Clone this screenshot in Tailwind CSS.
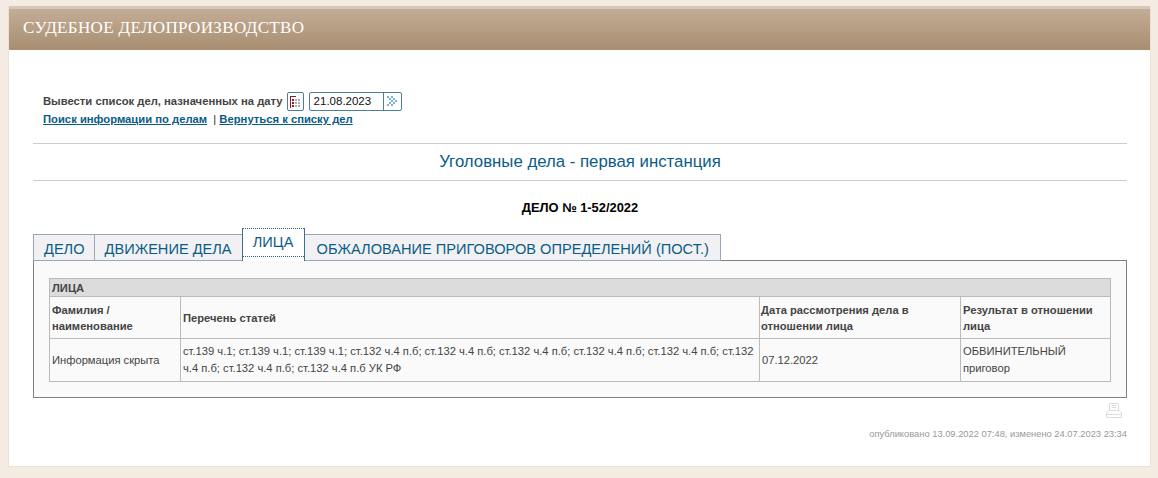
<!DOCTYPE html>
<html lang="ru">
<head>
  <meta charset="UTF-8" />
  <title>Судебное делопроизводство</title>
  <script src="https://cdn.jsdelivr.net/npm/@tailwindcss/browser@4"></script>
</head>
<body class="bg-[#f4ece3] font-['Liberation_Sans',Arial,sans-serif] text-[11.2px] text-[#333] overflow-hidden">
  <div class="h-[478px] pt-[6px] pl-[8px]">
    <div class="w-[1143px] h-[461px] bg-white border-x border-b border-[#ebe1d6]">
      <!-- шапка -->
      <div class="h-[44px] border-t-[3px] border-[#d6c8b8] bg-gradient-to-b from-[#c4ad96] to-[#a78e71] pl-[14px] pt-[9px] font-['Liberation_Serif',serif] text-[17px] leading-[20px] tracking-[0.35px] text-white">СУДЕБНОЕ ДЕЛОПРОИЗВОДСТВО</div>

      <div class="pl-[24px] pr-[23px]">
        <div class="pl-[10px] pt-[41px] h-[93px]">
          <div class="flex items-center h-[20px] font-bold text-[11.25px] text-[#444]">
            <span>Вывести список дел, назначенных на дату</span>
            <span class="ml-[4px] w-[17px] h-[19px] border border-[#4d7f99] rounded-[2px] flex items-center justify-center">
              <svg width="11" height="13" viewBox="0 0 11 13">
                <path d="M0 1h1v12H0zM1 1h5v1H1z" fill="#8b1a2b"/>
                <path d="M2 4h2v2H2zM2 7h2v2H2zM2 10h2v2H2z" fill="#8b1a2b"/>
                <path d="M5 4h2v2H5zM8 4h2v2H8zM5 7h2v2H5zM8 7h2v2H8zM5 10h2v2H5zM8 10h2v2H8z" fill="#a3aeb8"/>
              </svg>
            </span>
            <div class="ml-[5px] w-[93px] h-[19px] border border-[#4d7f99] rounded-[2px] flex items-center">
              <span class="flex-1 pl-[4px] pt-px font-normal text-[11.5px] text-[#111]">21.08.2023</span>
              <span class="w-[18px] h-full border-l border-[#4d7f99] flex items-center justify-center">
                <svg width="12" height="12" viewBox="0 0 12 12" fill="#7db4d6">
                  <path d="M1 1h2v2H1zM5 1h2v2H5zM3 3h2v2H3zM7 3h2v2H7zM5 5h2v2H5zM9 5h2v2H9zM3 7h2v2H3zM7 7h2v2H7zM1 9h2v2H1zM5 9h2v2H5z"/>
                </svg>
              </span>
            </div>
          </div>
          <div class="mt-[1px] h-[15px] leading-[15px] font-bold text-[11.25px] whitespace-nowrap">
            <a class="text-[#0a5c85] underline">Поиск информации по делам</a>
            <span class="ml-[3px] font-normal text-[#333]">|</span>
            <a class="text-[#0a5c85] underline">Вернуться к списку дел</a>
          </div>
        </div>

        <div class="h-[38px] border-y border-[#ccc] text-center text-[#0a5c85] text-[16.8px] leading-[35px]">Уголовные дела - первая инстанция</div>

        <div class="h-[47px] pt-[19px] text-center font-bold text-[12.9px] leading-[16px] text-black">ДЕЛО № 1-52/2022</div>

        <div class="flex items-end h-[33px] -mb-px text-[14.6px] text-[#0a5c85] relative">
          <div class="h-[27px] pl-[10px] pr-[9px] border border-[#9aa5b5] bg-[#f1f1f4] leading-[28px]">ДЕЛО</div>
          <div class="h-[27px] px-[10px] border border-l-0 border-[#9aa5b5] bg-[#f1f1f4] leading-[28px]">ДВИЖЕНИЕ ДЕЛА</div>
          <div class="h-[33px] w-[63px] ml-[-1px] border-x border-[#3f6f8a] bg-white">
            <div class="h-[29px] border-y border-dotted border-[#2f5f7a] text-center leading-[27px]">ЛИЦА</div>
          </div>
          <div class="h-[27px] pl-[12px] pr-[11px] border border-l-0 border-[#9aa5b5] bg-[#f1f1f4] leading-[28px] whitespace-nowrap">ОБЖАЛОВАНИЕ ПРИГОВОРОВ ОПРЕДЕЛЕНИЙ (ПОСТ.)</div>
        </div>

        <div class="h-[138px] border border-[#808080] bg-[#fafafa] px-[15px] pt-[17px]">
          <table class="w-[1061px] table-fixed border-collapse text-[#444]">
            <colgroup>
              <col class="w-[131px]" />
              <col class="w-[579px]" />
              <col class="w-[201px]" />
              <col class="w-[150px]" />
            </colgroup>
            <tbody>
              <tr>
                <td colspan="4" class="h-[18px] border border-[#bbb] bg-[#dcdcdc] px-[2px] font-bold leading-[14px]">ЛИЦА</td>
              </tr>
              <tr class="font-bold leading-[16px]">
                <td class="h-[42px] border border-[#bbb] px-[2px]">Фамилия / наименование</td>
                <td class="border border-[#bbb] px-[2px]">Перечень статей</td>
                <td class="border border-[#bbb] px-[1px]">Дата рассмотрения дела в отношении лица</td>
                <td class="border border-[#bbb] px-[2px]">Результат в отношении лица</td>
              </tr>
              <tr class="leading-[17px]">
                <td class="h-[43px] border border-[#bbb] px-[2px]">Информация скрыта</td>
                <td class="border border-[#bbb] px-[2px]">ст.139 ч.1; ст.139 ч.1; ст.139 ч.1; ст.132 ч.4 п.б; ст.132 ч.4 п.б; ст.132 ч.4 п.б; ст.132 ч.4 п.б; ст.132 ч.4 п.б; ст.132 ч.4 п.б; ст.132 ч.4 п.б; ст.132 ч.4 п.б УК РФ</td>
                <td class="border border-[#bbb] px-[2px]">07.12.2022</td>
                <td class="border border-[#bbb] px-[2px]">ОБВИНИТЕЛЬНЫЙ приговор</td>
              </tr>
            </tbody>
          </table>
        </div>

        <div class="flex justify-end pt-[5px] pr-[5px]">
          <svg width="16" height="16" viewBox="0 0 16 16" fill="none" stroke="#dcdcdc">
            <path d="M3.500 7.500v-7h9v7M5.500 2.500h5M5.500 4.500h5M3.500 7.500l-3 2v5h15v-5l-3-2zM.5 11.500h15"/>
          </svg>
        </div>
        <div class="mt-[9px] text-right text-[9.33px] leading-[12px] text-[#999]">опубликовано 13.09.2022 07:48, изменено 24.07.2023 23:34</div>
      </div>
    </div>
  </div>
</body>
</html>
